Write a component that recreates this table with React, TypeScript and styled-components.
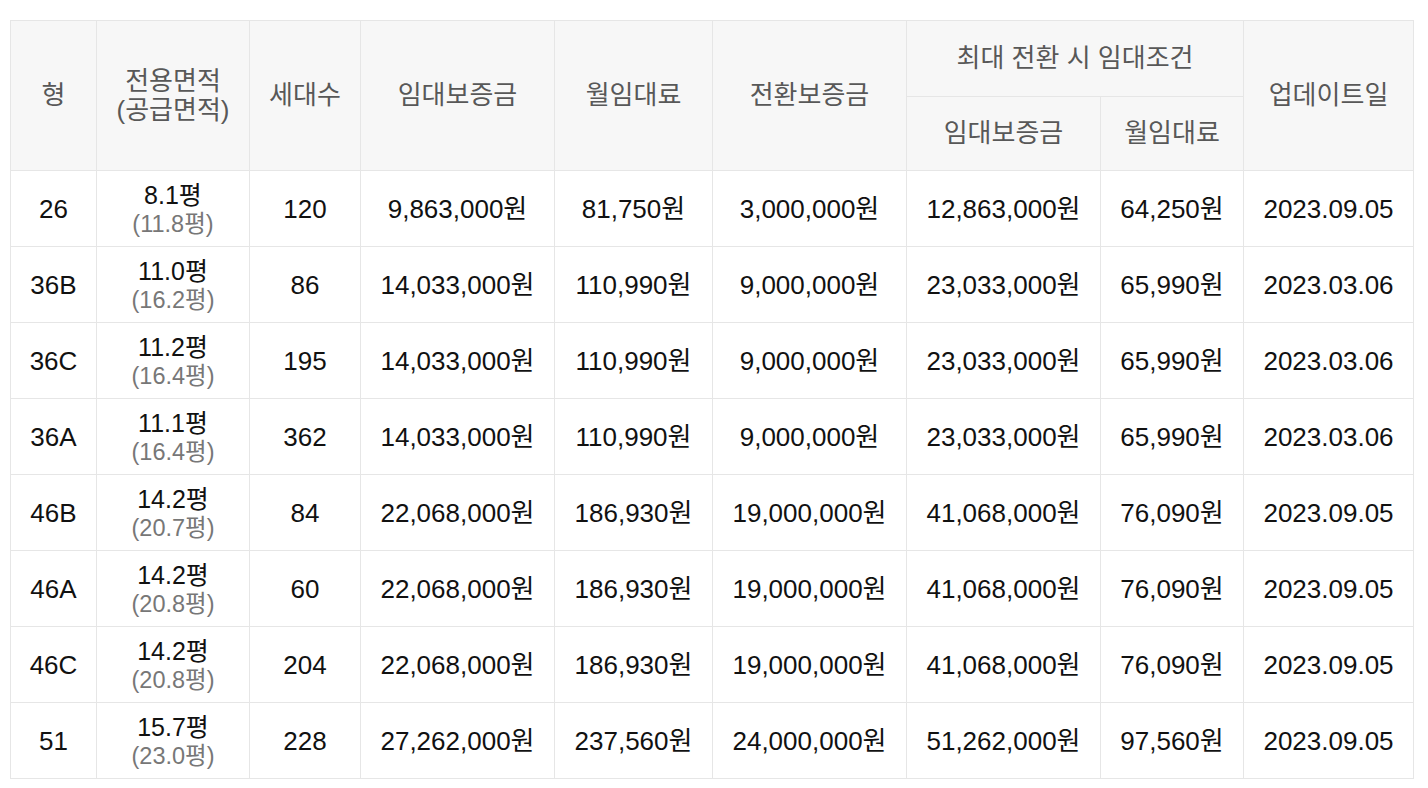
import React from "react";
import styled, { createGlobalStyle } from "styled-components";

const GlobalStyle = createGlobalStyle`
  html, body {
    margin: 0;
    padding: 0;
    background: #ffffff;
  }
  body {
    font-family: "Liberation Sans", Arial, "Noto Sans CJK KR", sans-serif;
  }
`;

const Page = styled.div`
  padding: 20px 15px 10px 10px;
`;

const Table = styled.table`
  width: 1403px;
  table-layout: fixed;
  border-collapse: collapse;
  border-top: 1px solid #d6d6d6;
  font-family: "Liberation Sans", Arial, "Noto Sans CJK KR", sans-serif;
`;

const HeadCell = styled.th<{ $h: number }>`
  height: ${(p) => p.$h - 1}px;
  padding: 0;
  background: #f7f7f7;
  border: 1px solid #e6e6e6;
  color: #585858;
  font-weight: 400;
  font-size: 26px;
  line-height: 29px;
  text-align: center;
  vertical-align: middle;
`;

const Cell = styled.td`
  height: 75px;
  padding: 0;
  border: 1px solid #e6e6e6;
  color: #111111;
  font-size: 26px;
  line-height: 30px;
  text-align: center;
  vertical-align: middle;
  white-space: nowrap;
`;

const Main = styled.div`
  font-size: 25px;
  line-height: 30px;
  color: #111111;
`;

const Sub = styled.div`
  font-size: 23.5px;
  line-height: 28px;
  color: #777777;
`;

const widths = [86, 153, 111, 194, 158, 194, 194, 143, 170];

type Row = {
  type: string;
  area: string;
  supply: string;
  units: string;
  deposit: string;
  rent: string;
  conv: string;
  maxDeposit: string;
  maxRent: string;
  date: string;
};

const rows: Row[] = [
  { type: "26", area: "8.1평", supply: "(11.8평)", units: "120", deposit: "9,863,000원", rent: "81,750원", conv: "3,000,000원", maxDeposit: "12,863,000원", maxRent: "64,250원", date: "2023.09.05" },
  { type: "36B", area: "11.0평", supply: "(16.2평)", units: "86", deposit: "14,033,000원", rent: "110,990원", conv: "9,000,000원", maxDeposit: "23,033,000원", maxRent: "65,990원", date: "2023.03.06" },
  { type: "36C", area: "11.2평", supply: "(16.4평)", units: "195", deposit: "14,033,000원", rent: "110,990원", conv: "9,000,000원", maxDeposit: "23,033,000원", maxRent: "65,990원", date: "2023.03.06" },
  { type: "36A", area: "11.1평", supply: "(16.4평)", units: "362", deposit: "14,033,000원", rent: "110,990원", conv: "9,000,000원", maxDeposit: "23,033,000원", maxRent: "65,990원", date: "2023.03.06" },
  { type: "46B", area: "14.2평", supply: "(20.7평)", units: "84", deposit: "22,068,000원", rent: "186,930원", conv: "19,000,000원", maxDeposit: "41,068,000원", maxRent: "76,090원", date: "2023.09.05" },
  { type: "46A", area: "14.2평", supply: "(20.8평)", units: "60", deposit: "22,068,000원", rent: "186,930원", conv: "19,000,000원", maxDeposit: "41,068,000원", maxRent: "76,090원", date: "2023.09.05" },
  { type: "46C", area: "14.2평", supply: "(20.8평)", units: "204", deposit: "22,068,000원", rent: "186,930원", conv: "19,000,000원", maxDeposit: "41,068,000원", maxRent: "76,090원", date: "2023.09.05" },
  { type: "51", area: "15.7평", supply: "(23.0평)", units: "228", deposit: "27,262,000원", rent: "237,560원", conv: "24,000,000원", maxDeposit: "51,262,000원", maxRent: "97,560원", date: "2023.09.05" },
];

export default function App() {
  return (
    <>
      <GlobalStyle />
      <Page>
        <Table>
          <colgroup>
            {widths.map((w, i) => (
              <col key={i} style={{ width: w }} />
            ))}
          </colgroup>
          <thead>
            <tr>
              <HeadCell $h={76} rowSpan={2}>형</HeadCell>
              <HeadCell $h={76} rowSpan={2}>
                전용면적
                <br />
                (공급면적)
              </HeadCell>
              <HeadCell $h={76} rowSpan={2}>세대수</HeadCell>
              <HeadCell $h={76} rowSpan={2}>임대보증금</HeadCell>
              <HeadCell $h={76} rowSpan={2}>월임대료</HeadCell>
              <HeadCell $h={76} rowSpan={2}>전환보증금</HeadCell>
              <HeadCell $h={76} colSpan={2}>최대 전환 시 임대조건</HeadCell>
              <HeadCell $h={76} rowSpan={2}>업데이트일</HeadCell>
            </tr>
            <tr>
              <HeadCell $h={74}>임대보증금</HeadCell>
              <HeadCell $h={74}>월임대료</HeadCell>
            </tr>
          </thead>
          <tbody>
            {rows.map((r) => (
              <tr key={r.type}>
                <Cell>{r.type}</Cell>
                <Cell>
                  <Main>{r.area}</Main>
                  <Sub>{r.supply}</Sub>
                </Cell>
                <Cell>{r.units}</Cell>
                <Cell>{r.deposit}</Cell>
                <Cell>{r.rent}</Cell>
                <Cell>{r.conv}</Cell>
                <Cell>{r.maxDeposit}</Cell>
                <Cell>{r.maxRent}</Cell>
                <Cell>{r.date}</Cell>
              </tr>
            ))}
          </tbody>
        </Table>
      </Page>
    </>
  );
}
